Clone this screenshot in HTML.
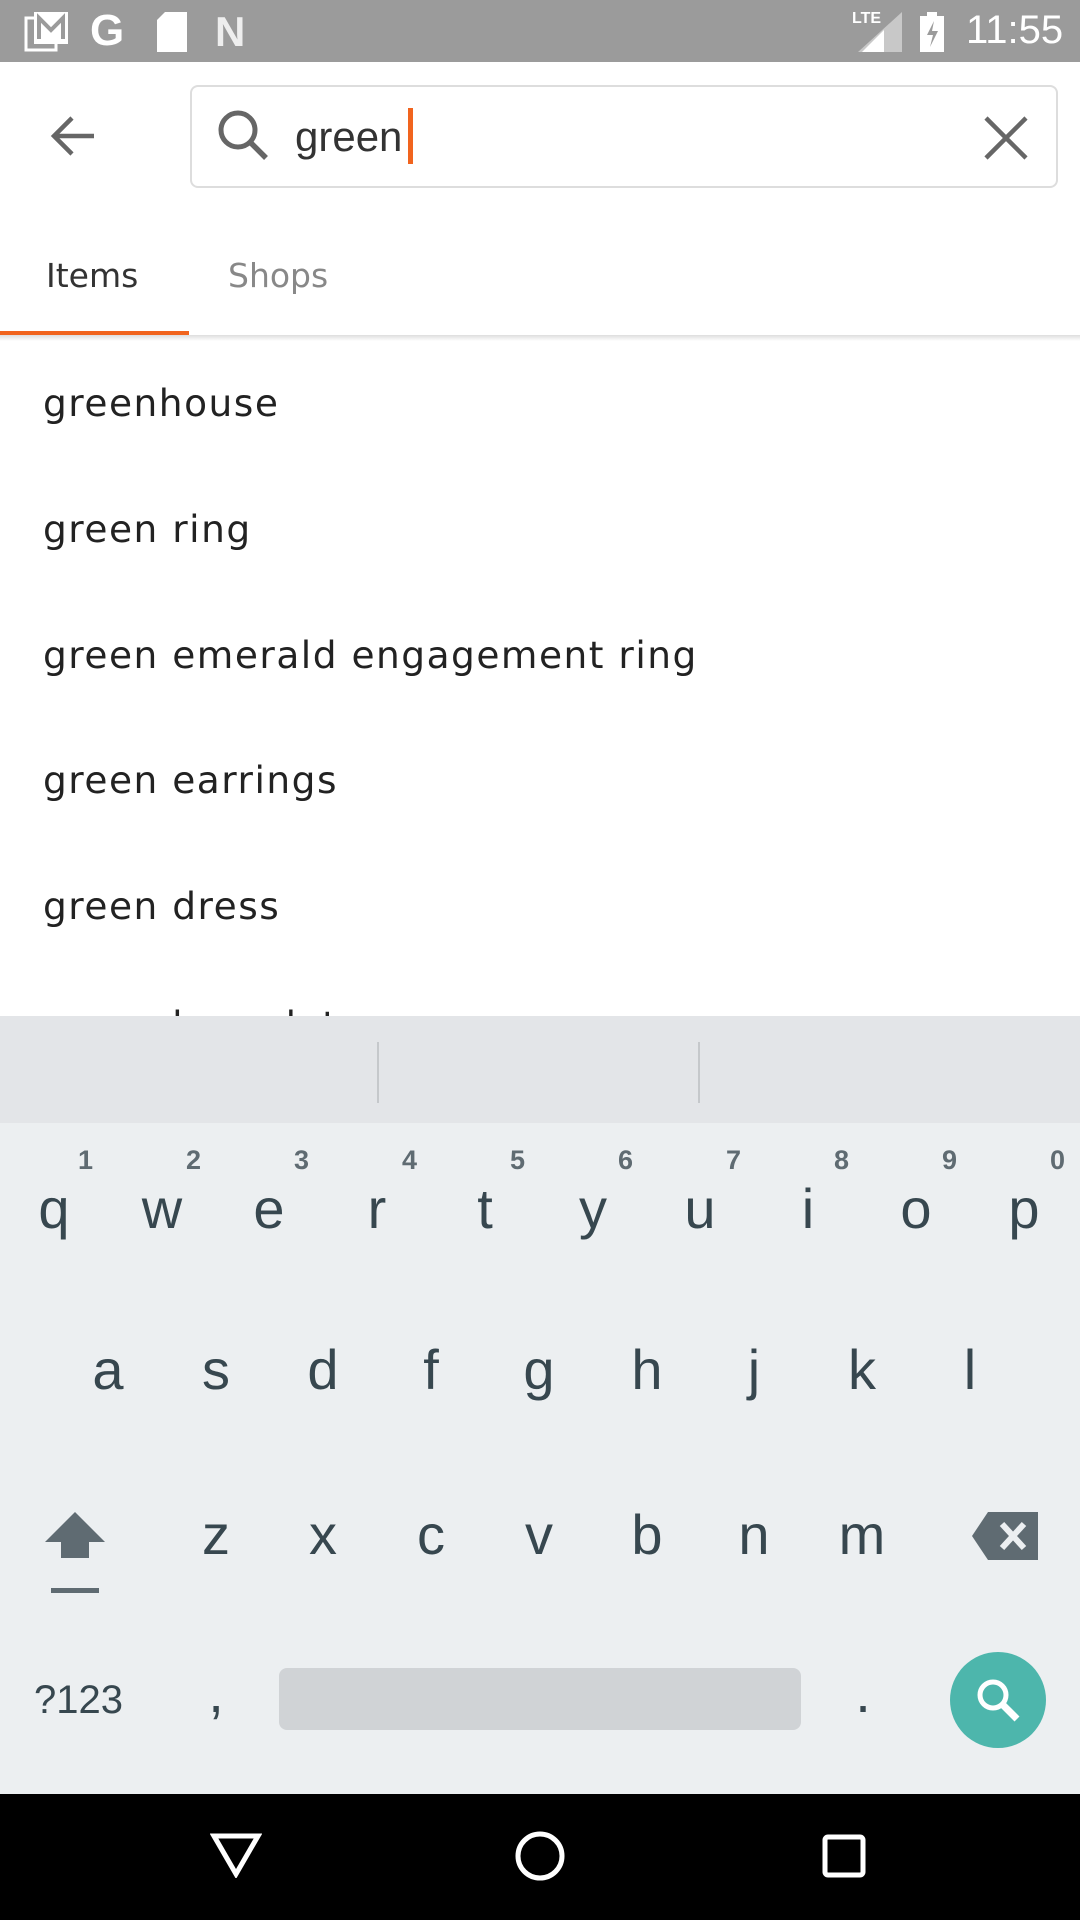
<!DOCTYPE html>
<html><head><meta charset="utf-8"><style>
*{margin:0;padding:0;box-sizing:border-box}
body{width:1080px;height:1920px;position:relative;overflow:hidden;background:#fff;font-family:"Liberation Sans",sans-serif}
.abs{position:absolute}
#status{left:0;top:0;width:1080px;height:62px;background:#9b9b9b}
#search{left:190px;top:85px;width:868px;height:103px;border:2px solid #ddd;border-radius:8px}
.sug{position:absolute;left:43px;font-size:37.5px;color:#222;font-family:"DejaVu Sans",sans-serif;letter-spacing:1.5px}
#kb{left:0;top:1016px;width:1080px;height:778px;background:#eceff1}
#strip{left:0;top:1016px;width:1080px;height:107px;background:#e3e5e8}
.k{position:absolute;width:80px;margin-left:-40px;text-align:center;font-size:56px;color:#37474f}
.d{position:absolute;font-size:27px;color:#5f6b72;font-weight:bold}
#nav{left:0;top:1794px;width:1080px;height:126px;background:#000}
</style></head><body>
<div id="status" class="abs">
 <svg class="abs" style="left:24px;top:12px" width="46" height="40" viewBox="0 0 46 40"><rect x="2" y="6" width="30" height="32" fill="none" stroke="#fff" stroke-width="3"/><rect x="10" y="0" width="34" height="32" fill="#fff"/><path d="M15 27V6l12 12 12-12v21" fill="none" stroke="#9b9b9b" stroke-width="4"/></svg>
 <div class="abs" style="left:90px;top:6px;color:#fff;font-size:44px;font-weight:bold">G</div>
 <svg class="abs" style="left:157px;top:12px" width="30" height="40"><path d="M8 0H30V40H0V8Z" fill="#fff"/></svg>
 <div class="abs" style="left:215px;top:8px;color:#eee;font-size:42px;font-weight:bold">N</div>
 <div class="abs" style="left:852px;top:10px;color:#fff;font-size:16px;font-weight:bold">LTE</div>
 <svg class="abs" style="left:858px;top:12px" width="44" height="40"><path d="M44 0V40H0Z" fill="#c8c8c8"/><path d="M26 18V40H4Z" fill="#fff"/></svg>
 <svg class="abs" style="left:920px;top:12px" width="24" height="40"><rect x="0" y="4" width="24" height="36" fill="#fff"/><rect x="7" y="0" width="10" height="5" fill="#fff"/><path d="M14 9l-7 14h6l-3 12 8-16h-6z" fill="#9b9b9b"/></svg>
 <div class="abs" style="left:966px;top:8px;color:#fff;font-size:40px">11:55</div>
</div>
<svg class="abs" style="left:48px;top:114px" width="50" height="44" viewBox="0 0 50 44"><path d="M46 22H6M24 4L6 22l18 18" fill="none" stroke="#666" stroke-width="4.5"/></svg>
<div id="search" class="abs"></div>
<svg class="abs" style="left:214px;top:106px" width="60" height="60" viewBox="0 0 60 60"><circle cx="24" cy="24" r="17" fill="none" stroke="#666" stroke-width="5"/><path d="M36 36l16 16" stroke="#666" stroke-width="5.5"/></svg>
<div class="abs" style="left:295px;top:113px;font-size:42px;color:#333">green</div>
<div class="abs" style="left:408px;top:108px;width:5px;height:56px;background:#f1641e"></div>
<svg class="abs" style="left:982px;top:114px" width="48" height="48"><path d="M4 4L44 44M44 4L4 44" stroke="#666" stroke-width="4.5"/></svg>
<div class="abs" style="left:46px;top:256px;font-size:33px;color:#333;font-family:'DejaVu Sans',sans-serif">Items</div>
<div class="abs" style="left:228px;top:256px;font-size:33px;color:#888;font-family:'DejaVu Sans',sans-serif">Shops</div>
<div class="abs" style="left:0;top:331px;width:189px;height:4px;background:#f1641e"></div>
<div class="abs" style="left:0;top:335px;width:1080px;height:6px;background:linear-gradient(#ddd,#fff)"></div>
<div class="sug" style="top:381px">greenhouse</div>
<div class="sug" style="top:507px">green ring</div>
<div class="sug" style="top:633px">green emerald engagement ring</div>
<div class="sug" style="top:758px">green earrings</div>
<div class="sug" style="top:884px">green dress</div>
<div class="sug" style="top:1003px">green bracelet</div>
<div id="kb" class="abs"></div>
<div id="strip" class="abs"></div>
<div class="abs" style="left:377px;top:1042px;width:2px;height:61px;background:#c5c8cb"></div>
<div class="abs" style="left:698px;top:1042px;width:2px;height:61px;background:#c5c8cb"></div>
<div class="k" style="left:54px;top:1176px">q</div><div class="d" style="left:78px;top:1145px">1</div>
<div class="k" style="left:162px;top:1176px">w</div><div class="d" style="left:186px;top:1145px">2</div>
<div class="k" style="left:269px;top:1176px">e</div><div class="d" style="left:294px;top:1145px">3</div>
<div class="k" style="left:377px;top:1176px">r</div><div class="d" style="left:402px;top:1145px">4</div>
<div class="k" style="left:485px;top:1176px">t</div><div class="d" style="left:510px;top:1145px">5</div>
<div class="k" style="left:593px;top:1176px">y</div><div class="d" style="left:618px;top:1145px">6</div>
<div class="k" style="left:700px;top:1176px">u</div><div class="d" style="left:726px;top:1145px">7</div>
<div class="k" style="left:808px;top:1176px">i</div><div class="d" style="left:834px;top:1145px">8</div>
<div class="k" style="left:916px;top:1176px">o</div><div class="d" style="left:942px;top:1145px">9</div>
<div class="k" style="left:1024px;top:1176px">p</div><div class="d" style="left:1050px;top:1145px">0</div>
<div class="k" style="left:108px;top:1337px">a</div>
<div class="k" style="left:216px;top:1337px">s</div>
<div class="k" style="left:323px;top:1337px">d</div>
<div class="k" style="left:431px;top:1337px">f</div>
<div class="k" style="left:539px;top:1337px">g</div>
<div class="k" style="left:647px;top:1337px">h</div>
<div class="k" style="left:754px;top:1337px">j</div>
<div class="k" style="left:862px;top:1337px">k</div>
<div class="k" style="left:970px;top:1337px">l</div>
<svg class="abs" style="left:43px;top:1508px" width="64" height="88"><path d="M32 4L62 34H46V50H18V34H2Z" fill="#5f6b72"/><rect x="8" y="80" width="48" height="5" fill="#5f6b72"/></svg>
<div class="k" style="left:216px;top:1502px">z</div>
<div class="k" style="left:323px;top:1502px">x</div>
<div class="k" style="left:431px;top:1502px">c</div>
<div class="k" style="left:539px;top:1502px">v</div>
<div class="k" style="left:647px;top:1502px">b</div>
<div class="k" style="left:754px;top:1502px">n</div>
<div class="k" style="left:862px;top:1502px">m</div>
<svg class="abs" style="left:972px;top:1512px" width="66" height="48"><path d="M16 0H66V48H16L0 24Z" fill="#5f6b72"/><path d="M30 12l22 24M52 12L30 36" stroke="#eceff1" stroke-width="6"/></svg>
<div class="abs" style="left:34px;top:1678px;font-size:40px;color:#37474f">?123</div>
<div class="k" style="left:216px;top:1660px">,</div>
<div class="abs" style="left:279px;top:1668px;width:522px;height:62px;background:#d0d3d6;border-radius:8px"></div>
<div class="k" style="left:863px;top:1660px">.</div>
<div class="abs" style="left:950px;top:1652px;width:96px;height:96px;border-radius:50%;background:#4db6ac"></div>
<svg class="abs" style="left:972px;top:1674px" width="52" height="52"><circle cx="21" cy="21" r="13" fill="none" stroke="#fff" stroke-width="5"/><path d="M31 31l14 14" stroke="#fff" stroke-width="7"/></svg>
<div id="nav" class="abs"></div>
<svg class="abs" style="left:210px;top:1832px" width="52" height="46"><path d="M4 4H48L26 42Z" fill="none" stroke="#fff" stroke-width="5"/></svg>
<svg class="abs" style="left:514px;top:1830px" width="52" height="52"><circle cx="26" cy="26" r="22" fill="none" stroke="#fff" stroke-width="5"/></svg>
<svg class="abs" style="left:822px;top:1834px" width="44" height="44"><rect x="3" y="3" width="38" height="38" rx="3" fill="none" stroke="#fff" stroke-width="5"/></svg>
</body></html>
